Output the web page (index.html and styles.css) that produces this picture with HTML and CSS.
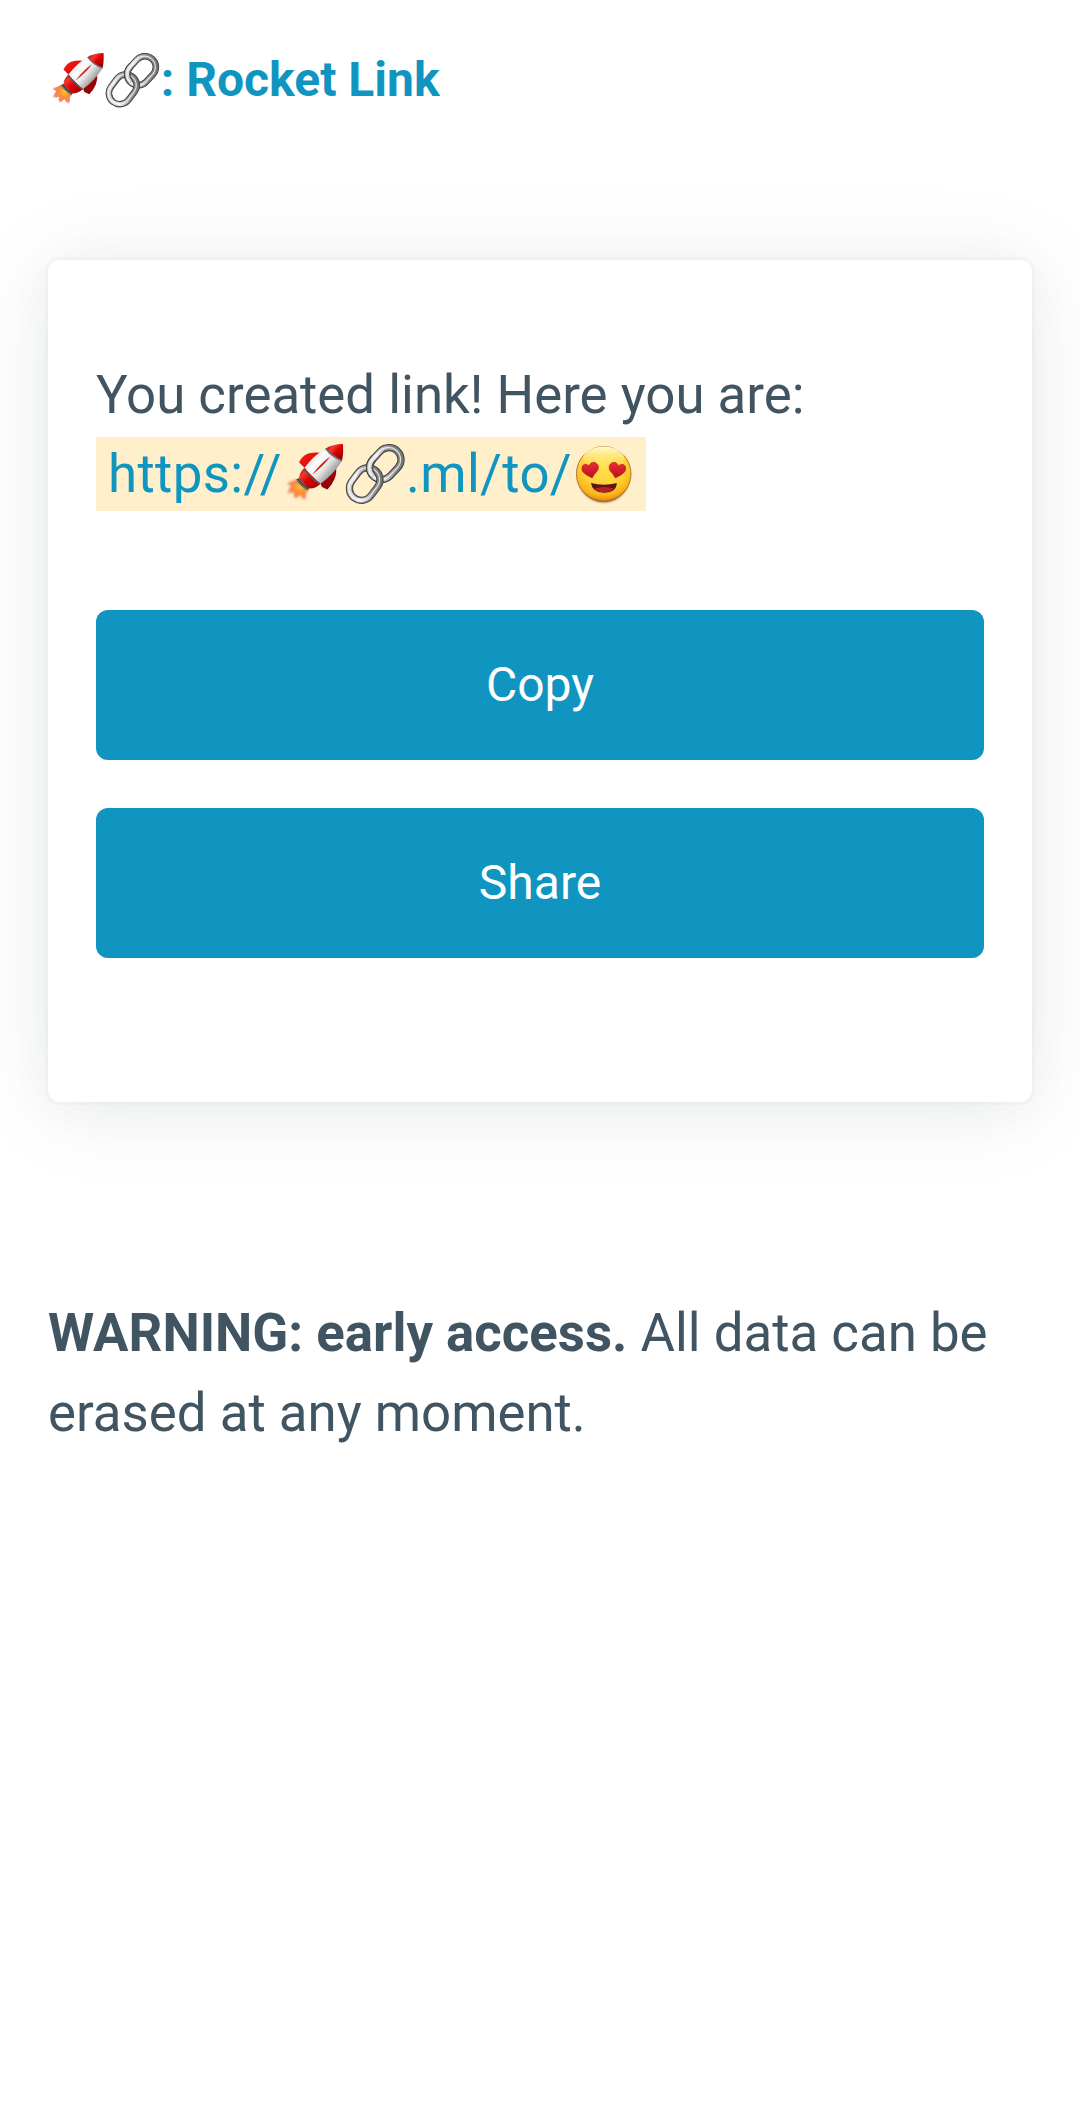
FILE: index.html
```html
<!DOCTYPE html>
<html lang="en">
<head>
<meta charset="utf-8">
<title>Rocket Link</title>
<link rel="stylesheet" href="styles.css">
</head>
<body>
<svg class="sprite" aria-hidden="true">
  <defs>
    <linearGradient id="hull" gradientUnits="userSpaceOnUse" x1="27" y1="14" x2="50" y2="34">
      <stop offset="0" stop-color="#d8d8d8"/><stop offset=".3" stop-color="#fff"/><stop offset=".6" stop-color="#e8e8e8"/><stop offset="1" stop-color="#8f8f8f"/>
    </linearGradient>
    <linearGradient id="red" gradientUnits="userSpaceOnUse" x1="18" y1="10" x2="50" y2="42">
      <stop offset="0" stop-color="#f02018"/><stop offset=".5" stop-color="#df0000"/><stop offset="1" stop-color="#850008"/>
    </linearGradient>
    <linearGradient id="nose" x1="0" y1="0" x2="1" y2=".8">
      <stop offset="0" stop-color="#8d0008"/><stop offset=".35" stop-color="#f3392e"/><stop offset=".6" stop-color="#df0000"/><stop offset="1" stop-color="#830006"/>
    </linearGradient>
    <linearGradient id="base" x1="0" y1="0" x2="1" y2="1">
      <stop offset="0" stop-color="#a4000b"/><stop offset=".25" stop-color="#f0392f"/><stop offset=".5" stop-color="#df0000"/><stop offset="1" stop-color="#97000a"/>
    </linearGradient>
    <radialGradient id="fire" gradientUnits="userSpaceOnUse" cx="18" cy="44" r="15">
      <stop offset="0" stop-color="#ffc72c"/><stop offset=".35" stop-color="#f99135"/><stop offset=".7" stop-color="#f26a3c" stop-opacity=".8"/><stop offset="1" stop-color="#f6a08a" stop-opacity=".2"/>
    </radialGradient>
    <filter id="soft"><feGaussianBlur stdDeviation=".8"/></filter>
    <linearGradient id="steel" gradientUnits="userSpaceOnUse" x1="-16" y1="-12" x2="16" y2="14">
      <stop offset="0" stop-color="#cfcfcf"/><stop offset=".3" stop-color="#ececec"/><stop offset=".55" stop-color="#aaa"/><stop offset="1" stop-color="#6c6c6c"/>
    </linearGradient>
    <radialGradient id="skin" cx=".5" cy=".3" r=".75">
      <stop offset="0" stop-color="#ffe454"/><stop offset=".55" stop-color="#ffd238"/><stop offset=".8" stop-color="#fbb41b"/><stop offset="1" stop-color="#dd7200"/>
    </radialGradient>
    <linearGradient id="gloss" x1="0" y1="0" x2="0" y2="1">
      <stop offset="0" stop-color="#fffbd5"/><stop offset="1" stop-color="#ffe45c" stop-opacity="0"/>
    </linearGradient>
    <linearGradient id="heartfill" x1="0" y1="0" x2="0" y2="1">
      <stop offset="0" stop-color="#ef2b35"/><stop offset="1" stop-color="#b51220"/>
    </linearGradient>
    <g id="ring">
      <rect x="-17.5" y="-12" width="35" height="24" rx="12" stroke="#333" stroke-width="7.2"/>
      <rect x="-17.5" y="-12" width="35" height="24" rx="12" stroke="#666" stroke-width="6"/>
      <rect x="-17.6" y="-12.2" width="35" height="24" rx="12" stroke="url(#steel)" stroke-width="4.2"/>
      <rect x="-17.8" y="-12.4" width="35" height="24" rx="12" stroke="#fff" stroke-opacity=".75" stroke-width="1.2"/>
    </g>
    <clipPath id="over"><path d="M18 12H32V29L28 34L20 29Z"/></clipPath>
    <symbol id="rocket" viewBox="0 0 62 62">
      <path filter="url(#soft)" fill="url(#fire)" d="M14 36Q9 40 4 39Q6 42 9 43Q6 48 4 50Q9 51 12 49Q11 53 13 56Q16 54 18 52Q20 56 23 58Q25 54 24 50L27 46Z"/>
      <path fill="url(#red)" d="M17 19.3Q20 13 25.5 10.7Q31 9 38 9.5L23 25.3Z"/>
      <path fill="url(#red)" d="M54 24.5Q55 30 52.5 36Q50 42 45.3 46.5L40 44L38.5 40.5Z"/>
      <path fill="url(#hull)" d="M43.5 5.5Q32 12 22.3 25L38.2 41Q51 32 60 18Z"/>
      <path fill="url(#nose)" d="M43.5 5.5Q51 1.2 61 1Q61.8 10 60 18Q50 14.5 43.5 5.5Z"/>
      <path fill="none" stroke="#707070" stroke-width="1.7" d="M43.7 5.6Q50 14 60 17.7"/>
      <path fill="url(#base)" d="M22.3 25Q17 30 17 36L27 45.5Q33 46 38.2 41Z"/>
      <path fill="none" stroke="#555" stroke-width="1.6" d="M22.2 25.2Q28.5 35 38.2 41"/>
      <path fill="none" stroke="#4c4444" stroke-width="3.2" d="M15.5 35.8Q19.5 42 26.5 46"/>
      <path fill="none" stroke="#a09a9a" stroke-width=".7" d="M15 37Q19 42.5 25.5 46.6"/>
      <path fill="#d8141a" d="M48.5 13.6Q41 18 30 31.7Q41 23.5 48.5 13.6Z"/>
    </symbol>
    <symbol id="chain" viewBox="0 0 62 62">
      <g fill="none">
        <use href="#ring" transform="translate(41.3 20.6) rotate(-47)"/>
        <use href="#ring" transform="translate(20.7 41) rotate(-53)"/>
        <g clip-path="url(#over)"><use href="#ring" transform="translate(41.3 20.6) rotate(-47)"/></g>
      </g>
    </symbol>
    <symbol id="heart" viewBox="0 0 18 17">
      <path fill="url(#heartfill)" stroke="#a91720" stroke-width=".5" d="M10.8 16.4Q5 13.8 1.8 10.6C-1 7 .8 2.8 4.1 2.7Q6.6 2.7 7.7 4.5C8.6 1.5 11.4-.2 14.2 1.2C17.8 3 17.9 7 15.6 10Q13 12.4 10.8 16.4Z"/>
    </symbol>
    <symbol id="face" viewBox="0 0 62 62">
      <ellipse cx="31.7" cy="32.8" rx="25.8" ry="26.5" fill="#664b26" filter="url(#soft)"/>
      <circle cx="31.7" cy="30.8" r="27.3" fill="url(#skin)" stroke="#a46416" stroke-width=".8"/>
      <ellipse cx="31.7" cy="15" rx="20.5" ry="11.5" fill="url(#gloss)"/>
      <use href="#heart" x="9.3" y="18.6" width="18" height="17"/>
      <use href="#heart" width="18" height="17" transform="translate(54.2 18.6) scale(-1 1)"/>
      <path fill="#5e1515" d="M19 40Q32 43.5 44.8 40Q44.5 49.5 32 49.8Q20 49.5 19 40Z"/>
      <path fill="#bd2024" d="M22.3 45.8Q32 42.5 41.8 45.6Q38.6 49.2 32 49.2Q25.3 49.2 22.3 45.8Z"/>
    </symbol>
  </defs>
</svg>
<header class="header">
  <a class="brand"><svg class="emoji"><use href="#rocket"/></svg><svg class="emoji"><use href="#chain"/></svg>: Rocket Link</a>
</header>
<main>
  <article class="card">
    <p class="message">You created link! Here you are:<br><mark class="link">https://<svg class="emoji"><use href="#rocket"/></svg><svg class="emoji"><use href="#chain"/></svg>.ml/to/<svg class="emoji"><use href="#face"/></svg></mark></p>
    <div class="actions">
      <button class="button">Copy</button>
      <button class="button">Share</button>
    </div>
  </article>
  <p class="warning"><strong>WARNING: early access.</strong> All data can be erased at any moment.</p>
</main>
</body>
</html>
```
FILE: styles.css
```css
* { box-sizing: border-box; }
body {
  margin: 0;
  min-height: 2104px;
  overflow-x: hidden;
  background: #fff;
  color: #415462;
  font-family: Roboto, sans-serif;
  font-size: 52.8px;
  line-height: 79.2px;
}
p { margin: 0; }
.sprite { display: block; width: 0; height: 0; }
.header {
  height: 260px;
  padding: 44px 48px 0;
}
.brand {
  display: block;
  color: #1095c1;
  font-size: 48px;
  font-weight: 700;
  line-height: 72px;
}
.emoji { width: 62px; height: 62px; vertical-align: -13.6px; }
.brand .emoji { width: 56.4px; height: 56.4px; vertical-align: -12px; }
.card {
  height: 842px;
  margin: 0 48px;
  padding: 95.6px 48px 0;
  border-radius: 12px;
  background: #fff;
  box-shadow: 0 6px 48px rgba(27, 40, 50, .04), 0 6px 96px rgba(27, 40, 50, .08), 0 0 0 3px rgba(27, 40, 50, .024);
}
.link {
  padding: 6px 12px;
  background: #fff0cb;
  color: #1095c1;
  font-kerning: normal;
  letter-spacing: .36px;
}
.actions {
  display: grid;
  gap: 48px;
  margin-top: 96px;
}
.button {
  height: 150px;
  border: 0;
  border-radius: 12px;
  background: #1095c1;
  color: #fff;
  font: 400 48px/72px Roboto, sans-serif;
}
.warning { padding: 192.4px 48px 0; }
```
